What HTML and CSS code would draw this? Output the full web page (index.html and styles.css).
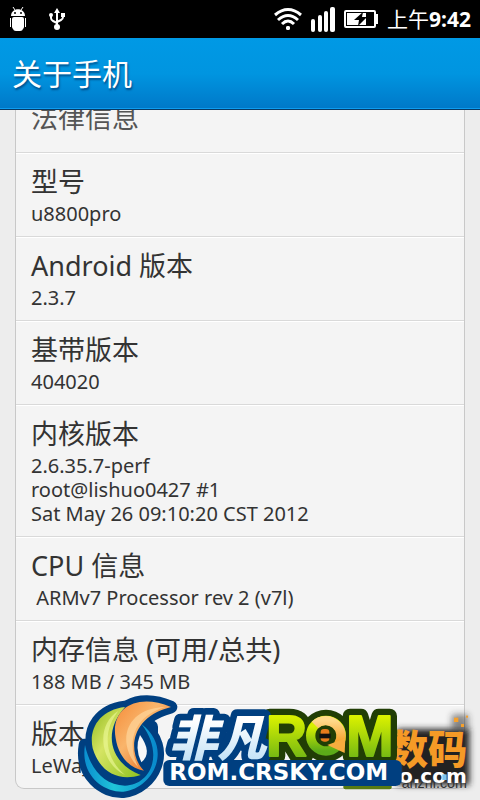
FILE: index.html
```html
<!DOCTYPE html>
<html lang="zh-CN">
  <head>
    <meta charset="UTF-8" />
    <meta name="viewport" content="width=device-width, initial-scale=1.0" />
    <title>关于手机</title>
    <link rel="stylesheet" href="styles.css">
  </head>
  <body>
    <div class="status-bar">
      <div class="notifications">
        <!-- android robot -->
        <svg width="18" height="24" viewBox="0 0 18 24" fill="#fff" aria-hidden="true">
          <path d="M4 0l2 3M14 0l-2 3" stroke="#fff" stroke-width="1" />
          <path d="M2 9C2 0 16 0 16 9z" />
          <rect x="4" y="10" width="10" height="14" rx="3" />
          <rect x="3" y="10" width="12" height="12" rx="2" />
          <rect x="1" y="11" width="1" height="9" />
          <rect x="16" y="11" width="1" height="9" />
          <circle cx="6" cy="6" r="1" fill="#000" />
          <circle cx="12" cy="6" r="1" fill="#000" />
        </svg>
        <!-- usb -->
        <svg width="16" height="22" viewBox="0 0 16 22" fill="#fff" aria-hidden="true">
          <path d="M8 3v16M2 7v3q0 2 2 3l4 2M14 7v2q0 2-2 3l-4 2" fill="none" stroke="#fff" stroke-width="2" />
          <path d="M8 0l3 5H5z" />
          <circle cx="8" cy="19" r="3" />
          <circle cx="2" cy="7" r="2" />
          <rect x="12" y="5" width="4" height="4" />
        </svg>
      </div>
      <div class="system-icons">
        <svg width="28" height="24" viewBox="0 0 28 24" fill="none" stroke="#fff" stroke-width="3" aria-hidden="true">
          <path d="M1 8Q14-3 27 8" />
          <path d="M4 13Q14 4 24 13" />
          <path d="M8 17Q14 11 20 17" />
          <circle cx="14" cy="21" r="2" fill="#fff" stroke="none" />
          <circle cx="14" cy="21" r="1" stroke-width="2" />
        </svg>
        <svg width="24" height="26" viewBox="0 0 24 26" fill="#fff" aria-hidden="true">
          <rect x="0" y="13" width="4" height="13" rx="2" />
          <rect x="7" y="9" width="4" height="17" rx="2" />
          <rect x="13" y="5" width="4" height="21" rx="2" />
          <rect x="19" y="1" width="5" height="25" rx="2" />
        </svg>
        <svg width="34" height="18" viewBox="0 0 34 18" aria-hidden="true">
          <rect x="1" y="1" width="30" height="16" rx="1" fill="none" stroke="#fff" stroke-width="2" />
          <rect x="32" y="4" width="2" height="10" fill="#fff" />
          <rect x="3" y="3" width="19" height="12" fill="#fff" />
          <path d="M19 2l-9 8h5l-1 6 9-9h-5z" fill="#000" />
        </svg>
        <span class="clock">上午<b>9:42</b></span>
      </div>
    </div>

    <header class="title-bar">
      <h1>关于手机</h1>
    </header>

    <main class="content">
      <ul class="info-list">
        <li class="legal"><h2>法律信息</h2></li>
        <li><h2>型号</h2><p>u8800pro</p></li>
        <li><h2>Android 版本</h2><p>2.3.7</p></li>
        <li><h2>基带版本</h2><p>404020</p></li>
        <li><h2>内核版本</h2><p>2.6.35.7-perf<br>root@lishuo0427 #1<br>Sat May 26 09:10:20 CST 2012</p></li>
        <li><h2>CPU 信息</h2><p>&nbsp;ARMv7 Processor rev 2 (v7l)</p></li>
        <li><h2>内存信息 (可用/总共)</h2><p>188 MB / 345 MB</p></li>
        <li><h2>版本</h2><p>LeWa_</p></li>
      </ul>
    </main>

    <!-- site badges over the end of the list -->
    <svg class="badge" width="410" height="115" viewBox="0 0 1230 345" aria-hidden="true">
      <defs>
        <linearGradient id="orange" x1="0" y1="0" x2="1" y2="1">
          <stop offset="0" stop-color="#f58b38" />
          <stop offset="0.4" stop-color="#f9b56b" />
          <stop offset="1" stop-color="#e35a10" />
        </linearGradient>
        <linearGradient id="green" x1="0" y1="0" x2="1" y2="1">
          <stop offset="0" stop-color="#8fb81c" />
          <stop offset="0.4" stop-color="#d5e463" />
          <stop offset="1" stop-color="#8fc31f" />
        </linearGradient>
        <linearGradient id="blue" x1="0" y1="0" x2="1" y2="0">
          <stop offset="0" stop-color="#0a8fd0" />
          <stop offset="0.4" stop-color="#20c4d8" />
          <stop offset="1" stop-color="#0788cc" />
        </linearGradient>
        <linearGradient id="ice" x1="0" y1="0" x2="0" y2="1">
          <stop offset="0.3" stop-color="#fff" />
          <stop offset="1" stop-color="#b5dcf5" />
        </linearGradient>
        <linearGradient id="lime" x1="0" y1="0" x2="0" y2="1">
          <stop offset="0.2" stop-color="#d8f000" />
          <stop offset="1" stop-color="#5cab18" />
        </linearGradient>
        <linearGradient id="gold" x1="0" y1="0" x2="0" y2="1">
          <stop offset="0" stop-color="#ffd98a" />
          <stop offset="1" stop-color="#f39a20" />
        </linearGradient>
        <filter id="soft" x="-50%" y="-50%" width="200%" height="200%">
          <feGaussianBlur stdDeviation="10" />
        </filter>
      </defs>

      <rect class="haze" x="980" y="132" width="218" height="168" filter="url(#soft)" />
      <path class="haze" d="M1145 88h50v50h-50z" filter="url(#soft)" opacity="0.5" />
      <g class="pixels">
        <rect x="1152" y="98" width="13" height="13" />
        <rect x="1173" y="117" width="9" height="9" />
        <rect x="1188" y="92" width="6" height="6" />
      </g>
      <text class="anzhi" x="995" y="308">anzhi.com</text>
      <text class="digital" x="956" y="238">数码</text>
      <text class="dotcom" x="987" y="294">o.com</text>
      <path d="M1117 268h13v17h-13z" fill="#7cc4f0" />
      <rect x="820" y="290" width="145" height="23" rx="6" fill="#577a12" />

      <text class="rom outline-green" x="588" y="212">R</text>
      <text class="rom outline-green" x="829" y="212">M</text>
      <circle cx="768" cy="152" r="78" fill="#213e05" />
      <text class="feifan outline-blue" x="296" y="212">非凡</text>
      <rect x="280" y="225" width="715" height="78" rx="18" fill="#003f80" />
      <text class="feifan" x="296" y="212">非凡</text>
      <text class="rom thick" x="588" y="212">R</text>
      <text class="rom thick" x="829" y="212">M</text>
      <circle cx="768" cy="152" r="46" fill="none" stroke="url(#lime)" stroke-width="28" />
      <path d="M735 120a46 46 0 0 1 70 59" fill="none" stroke="url(#gold)" stroke-width="28" />
      <path d="M772 180l54-20-2 44z" fill="#f7ad3e" />
      <rect x="752" y="132" width="26" height="38" rx="10" fill="#e87b1c" />
      <path d="M748 146h34v14h-34z" fill="#111" />
      <text class="site" x="298" y="286">ROM.CRSKY.COM</text>

      <g class="emblem-edge">
        <path d="M303 66C200 22 120 70 137 160C145 215 180 250 222 257C175 210 172 100 303 66z" />
        <path d="M165 66C90 75 55 130 68 190C90 265 150 290 212 270C130 240 90 150 165 66z" />
        <path d="M45 180C30 270 100 323 160 320C250 310 310 190 215 118C285 210 240 300 165 302C100 300 60 250 45 180z" />
        <path d="M205 125h40v130h-100z" />
      </g>
      <path d="M210 150Q193 190 214 232Q249 204 210 150z" fill="#f6f7f8" />
      <path d="M45 180C30 270 100 323 160 320C250 310 310 190 215 118C285 210 240 300 165 302C100 300 60 250 45 180z" fill="url(#blue)" />
      <path d="M165 66C90 75 55 130 68 190C90 265 150 290 212 270C130 240 90 150 165 66z" fill="url(#green)" />
      <path d="M145 78C75 120 90 235 165 270C105 220 95 140 145 78z" fill="#effa9b" opacity="0.6" />
      <path d="M303 66C200 22 120 70 137 160C145 215 180 250 222 257C175 210 172 100 303 66z" fill="url(#orange)" />
      <path d="M285 66C160 70 140 180 205 247C175 190 175 100 285 66z" fill="#ffd59b" opacity="0.7" />
    </svg>
  </body>
</html>
```

FILE: styles.css
```css
* {
  margin: 0;
  padding: 0;
  box-sizing: border-box;
}

body {
  font-family: "Noto Sans", "Noto Sans CJK SC", sans-serif;
  background: #ededed;
  color: #333;
  height: 100vh;
  display: flex;
  flex-direction: column;
  overflow: hidden;
  position: relative;
}

.status-bar {
  flex: none;
  height: 38px;
  padding: 0 9px;
  background: #000;
  color: #fff;
  display: flex;
  align-items: center;
  justify-content: space-between;
}

.notifications {
  display: flex;
  align-items: center;
  gap: 22px;
}

.system-icons {
  display: flex;
  align-items: center;
  gap: 9px;
}

.clock {
  font-size: 21px;
  line-height: 38px;
}

.title-bar {
  flex: none;
  height: 72px;
  padding: 0 12px;
  background: linear-gradient(#0099e5 0%, #0095e0 50%, #0078c8 100%);
  border-bottom: 1px solid #063a66;
  box-shadow: inset 0 -1px #0d9cf0;
}

.title-bar h1 {
  color: #fff;
  font-size: 30px;
  font-weight: 400;
  line-height: 72px;
  text-shadow: 1px 2px 2px rgba(0, 40, 90, 0.6);
}

.content {
  flex: 1;
  min-height: 0;
  padding: 0 15px;
  overflow: hidden;
}

.info-list {
  list-style: none;
  background: #f4f4f4;
  border: 1px solid #c8c8c8;
  border-top: none;
  border-radius: 0 0 9px 9px;
}

.info-list li {
  padding: 10px 15px;
  border-top: 1px solid #d9d9d9;
  box-shadow: inset 0 1px #fff;
}

/* the first row is scrolled half under the title bar */
.info-list .legal {
  height: 42px;
  display: flex;
  align-items: flex-end;
  overflow: hidden;
  border-top: none;
  box-shadow: none;
  padding-bottom: 16px;
  color: #555;
}

.info-list h2 {
  font-size: 27px;
  font-weight: 400;
  line-height: 37px;
}

.info-list p {
  margin-top: 2px;
  font-size: 20px;
  line-height: 24px;
}

.badge {
  position: absolute;
  right: 0;
  bottom: 0;
}

.haze {
  fill: #222;
}

.pixels {
  fill: #f5a02c;
}

.anzhi {
  font: 43px "Liberation Sans", sans-serif;
  fill: #333;
}

.digital {
  font: 900 118px "Noto Sans CJK SC", sans-serif;
  fill: #f59a26;
}

.dotcom {
  font: 700 60px "DejaVu Sans", sans-serif;
  fill: #fff;
}

.feifan {
  font: italic 900 146px "Noto Sans CJK SC", sans-serif;
  fill: url(#ice);
}

.rom {
  font: 700 170px "Liberation Sans", sans-serif;
  fill: url(#lime);
}

.thick {
  stroke: url(#lime);
  stroke-width: 6;
  stroke-linejoin: round;
}

.outline-blue {
  stroke: #003f80;
  stroke-width: 40;
  stroke-linejoin: round;
}

.outline-green {
  stroke: #213e05;
  stroke-width: 44;
  stroke-linejoin: round;
}

.site {
  font: 700 69px "DejaVu Sans", sans-serif;
  fill: #fff;
}

.emblem-edge {
  fill: #003f80;
  stroke: #003f80;
  stroke-width: 38;
  stroke-linejoin: round;
}
```
